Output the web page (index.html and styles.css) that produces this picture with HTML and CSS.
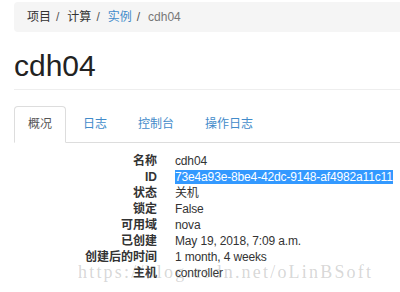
FILE: index.html
```html
<!DOCTYPE html>
<html lang="zh-CN">
<head>
  <meta charset="UTF-8">
  <meta name="viewport" content="width=device-width, initial-scale=1.0">
  <title>cdh04</title>
  <link rel="stylesheet" href="styles.css">
</head>
<body>
  <div class="page">
    <ol class="breadcrumb">
      <li>项目</li>
      <li>计算</li>
      <li><a href="#">实例</a></li>
      <li class="active">cdh04</li>
    </ol>

    <div class="page-header">
      <h1>cdh04</h1>
    </div>

    <ul class="nav-tabs">
      <li class="active"><a href="#">概况</a></li>
      <li><a href="#">日志</a></li>
      <li><a href="#">控制台</a></li>
      <li><a href="#">操作日志</a></li>
    </ul>

    <dl class="info">
      <dt>名称</dt>
      <dd>cdh04</dd>
      <dt>ID</dt>
      <dd><span class="selected">73e4a93e-8be4-42dc-9148-af4982a11c11</span></dd>
      <dt>状态</dt>
      <dd>关机</dd>
      <dt>锁定</dt>
      <dd>False</dd>
      <dt>可用域</dt>
      <dd>nova</dd>
      <dt>已创建</dt>
      <dd>May 19, 2018, 7:09 a.m.</dd>
      <dt>创建后的时间</dt>
      <dd>1 month, 4 weeks</dd>
      <dt>主机</dt>
      <dd>controller</dd>
    </dl>

    <div class="watermark">https://blog.csdn.net/oLinBSoft</div>
  </div>
</body>
</html>
```

FILE: styles.css
```css
body {
  margin: 0;
  font-family: "Liberation Sans", Arial, "Noto Sans CJK SC", sans-serif;
  font-size: 12px;
  color: #333;
  background: #fff;
  overflow: hidden;
}
.page {
  position: relative;
  padding-left: 14px;
  height: 292px;
}
.breadcrumb {
  list-style: none;
  margin: 2px -10px 0 0;
  padding: 8px 13px;
  line-height: 14px;
  background: #f5f5f5;
  border-radius: 4px;
  display: flex;
}
.breadcrumb li + li::before {
  content: "/";
  padding: 0 8px 0 5px;
  color: #555;
}
.breadcrumb a {
  color: #428bca;
  text-decoration: none;
}
.breadcrumb .active {
  color: #777;
}
.page-header {
  margin-top: 17px;
  padding-bottom: 7px;
  border-bottom: 1px solid #eee;
}
.page-header h1 {
  margin: 0;
  font-size: 30px;
  font-weight: normal;
  line-height: 33px;
  color: #222;
}
.nav-tabs {
  list-style: none;
  margin: 16px 0 0;
  padding: 0;
  display: flex;
  gap: 3px;
  border-bottom: 1px solid #ddd;
}
.nav-tabs li {
  margin-bottom: -1px;
}
.nav-tabs a {
  display: block;
  padding: 0 13px;
  line-height: 35px;
  border: 1px solid transparent;
  border-radius: 4px 4px 0 0;
  color: #428bca;
  text-decoration: none;
}
.nav-tabs .active a {
  color: #555;
  background: #fff;
  border-color: #ddd;
  border-bottom-color: #fff;
}
.info {
  display: grid;
  grid-template-columns: 143px 1fr;
  column-gap: 18px;
  margin: 10px 0 0;
  line-height: 16px;
}
.info dt {
  font-weight: bold;
  text-align: right;
  color: #333;
}
.info dd {
  margin: 0;
  white-space: nowrap;
  letter-spacing: -0.15px;
}
.selected {
  background: #3399ff;
  color: #fff;
}
.watermark {
  position: absolute;
  left: 78px;
  top: 260px;
  font-family: "Liberation Serif", "Times New Roman", serif;
  font-size: 18px;
  letter-spacing: 2.2px;
  color: rgba(120, 120, 120, 0.3);
  white-space: nowrap;
}
```
